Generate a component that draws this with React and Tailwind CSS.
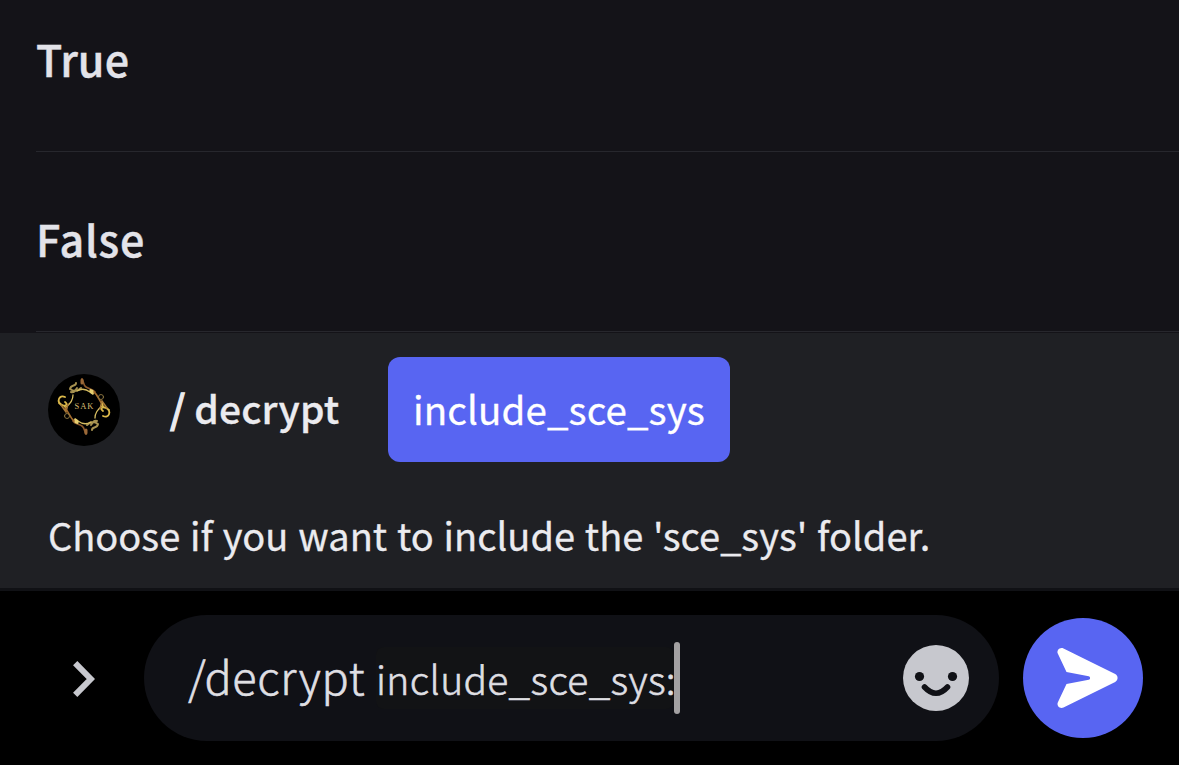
const choices = [
  { label: "True", size: "h-[152px] tracking-[0.1px]" },
  { label: "False", size: "h-[180px] tracking-[0.8px]" },
];

function Option({ label, size }) {
  return (
    <li className={`ml-9 flex ${size} shrink-0 flex-col justify-end border-b border-[#27272d] pb-[61px]`}>
      <span className="whitespace-nowrap text-[43px] font-medium leading-[64px] text-[#e3e3e9] [-webkit-text-stroke:0.4px_#e3e3e9]">
        {label}
      </span>
    </li>
  );
}

function Avatar() {
  return (
    <svg className="size-[72px] shrink-0 rounded-full bg-black" viewBox="0 0 72 72" fill="none" strokeLinecap="round">
      <defs>
        <g id="flourish">
          <path d="M34 5c2 3 1 6 4 8s7 2 9 5" stroke="#8c5a2c" strokeWidth="1.7" />
          <path d="M34 6v3" stroke="#9a6838" strokeWidth="3" />
          <path d="M22 15c1-5 6-2 6-6M22 15c4 3 8 2 11-1M23 18c3 1 4-1 6-4" stroke="#a69150" strokeWidth="2" />
          <path d="M29 17c5-3 9-2 13 1M25 21c0 5-3 9-7 12" stroke="#d6bd60" strokeWidth="1.3" />
          <path d="M17 23c-6-3-9 5-3 8 4 2 6-1 3-3M11 29c5 5 6 0 7 7" stroke="#dcb94a" strokeWidth="1.8" />
          <path d="M13 31l5 7 2-8" stroke="#a67838" strokeWidth="1.5" />
          <path d="M42 15c4 0 5 4 3 6-2-1-5-3-3-6Z" fill="#e7cf70" />
          <path d="M46 18c4 3 5 9 9 13" stroke="#a26a2c" strokeWidth="1.6" />
          <circle cx="53" cy="23" r="2.5" stroke="#927a43" strokeWidth="0.9" />
        </g>
      </defs>
      <use href="#flourish" />
      <use href="#flourish" transform="rotate(180 36 32.5)" />
      <text x="26.5" y="35.2" textLength="19" fill="#d6bb70" fontSize="8.5" fontFamily="Liberation Serif, serif">SAK</text>
    </svg>
  );
}

export default function App() {
  return (
    <main className="flex h-[765px] w-[1179px] flex-col overflow-hidden bg-black font-['Noto_Sans_CJK_JP',sans-serif]">
      <ul className="flex h-[333px] shrink-0 flex-col bg-[#141318]">
        {choices.map((c) => (
          <Option key={c.label} {...c} />
        ))}
      </ul>

      <section className="flex h-[258px] shrink-0 flex-col border-b-[3px] border-[#101115] bg-[#1f2024] pl-12 pt-6">
        <div className="flex h-[105px] items-center">
          <Avatar />
          <span className="ml-[50px] w-[218px] whitespace-nowrap pb-1 text-[39px] font-medium tracking-[0.15px] text-[#ebebef] [-webkit-text-stroke:0.3px_#ebebef]">
            <span className="[-webkit-text-stroke:1.2px_#ebebef]">/</span> decrypt
          </span>
          <span className="flex h-[105px] w-[342px] items-center justify-center whitespace-nowrap rounded-xl bg-[#5865f2] pb-0.5 text-[38.5px] tracking-[0.1px] text-white [-webkit-text-stroke:0.3px_white]">
            include_sce_sys
          </span>
        </div>
        <p className="mt-[43px] whitespace-nowrap text-[38px] leading-[60px] text-[#ebebef] [-webkit-text-stroke:0.3px_#ebebef] [word-spacing:1.3px]">
          Choose if you want to include the 'sce_sys' folder.
        </p>
      </section>

      <footer className="flex flex-1 items-start pt-6">
        <svg className="ml-[68px] mt-[46px] h-9 w-8 shrink-0" viewBox="0 0 32 36" fill="none">
          <path d="M7.2 2.1 22.8 18 7.2 33.9" stroke="#c7c8ce" strokeWidth="6" />
        </svg>
        <div className="ml-11 flex h-[126px] w-[855px] shrink-0 items-center rounded-full bg-[#101116] pl-11 pr-[30px] text-[#dfdfe3]">
          <span className="w-[188px] whitespace-nowrap pb-1 text-[45px] font-light tracking-[0.65px] [-webkit-text-stroke:0.6px_#dfdfe3]">
            /decrypt
          </span>
          <span className="w-[298px] whitespace-nowrap rounded-lg bg-[#121315] text-[39px] font-light leading-[62px] tracking-[0.3px] [-webkit-text-stroke:0.6px_#dfdfe3]">
            include_sce_sys:
          </span>
          <i className="h-[72px] w-1.5 shrink-0 rounded-full bg-[#a3a1a2]" />
          <svg className="ml-auto size-[66px] shrink-0" viewBox="0 0 66 66">
            <circle cx="33" cy="33" r="33" fill="#c7c8ce" />
            <circle cx="16.5" cy="31.5" r="4.6" fill="#101116" />
            <circle cx="49.5" cy="31.5" r="4.6" fill="#101116" />
            <path d="M21.5 42q11.5 12.5 23 0" fill="none" stroke="#101116" strokeWidth="5.6" strokeLinecap="round" />
          </svg>
        </div>
        <button className="ml-6 mt-[3px] size-[120px] shrink-0 rounded-full bg-[#5865f2]">
          <svg className="size-[120px]" viewBox="0 0 120 120">
            <path d="M40.5 30.4c-3.5-1.7-7.3 1.8-5.6 5.3L43.5 54l22.2 4.2c1.9.4 1.9 3.2 0 3.6L43.5 66l-8.6 18.3c-1.7 3.5 2.1 7 5.6 5.3l51.7-25.7c3.2-1.6 3.2-6.2 0-7.8L40.5 30.4Z" fill="white" />
          </svg>
        </button>
      </footer>
    </main>
  );
}
